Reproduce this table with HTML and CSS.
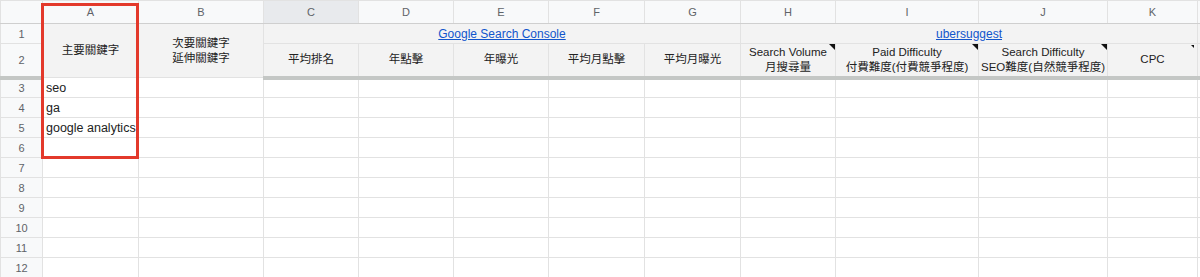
FILE: index.html
```html
<!DOCTYPE html>
<html lang="zh-Hant">
<head>
<meta charset="utf-8">
<title>Sheet</title>
<link rel="stylesheet" href="styles.css">
</head>
<body>
<div class="sheet">
  <table class="grid">
    <colgroup>
      <col class="c-rh"><col class="c-a"><col class="c-b"><col class="c-c"><col class="c-d"><col class="c-e"><col class="c-f"><col class="c-g"><col class="c-h"><col class="c-i"><col class="c-j"><col class="c-k"><col class="c-l">
    </colgroup>
    <tr class="r-colhead">
      <th class="corner"></th>
      <th class="colhead">A</th>
      <th class="colhead">B</th>
      <th class="colhead sel">C</th>
      <th class="colhead">D</th>
      <th class="colhead">E</th>
      <th class="colhead">F</th>
      <th class="colhead">G</th>
      <th class="colhead">H</th>
      <th class="colhead">I</th>
      <th class="colhead">J</th>
      <th class="colhead">K</th>
      <th class="colhead"></th>
    </tr>
    <tr class="r-1">
      <th class="rowhead">1</th>
      <td class="hd" rowspan="2">主要關鍵字</td>
      <td class="hd" rowspan="2">次要關鍵字<br>延伸關鍵字</td>
      <td class="hd link-cell" colspan="5"><a href="#">Google Search Console </a></td>
      <td class="hd link-cell" colspan="4"><a href="#">ubersuggest</a></td>
      <td class="hd"></td>
    </tr>
    <tr class="r-2">
      <th class="rowhead frz">2</th>
      <td class="hd frz">平均排名</td>
      <td class="hd frz">年點擊</td>
      <td class="hd frz">年曝光</td>
      <td class="hd frz">平均月點擊</td>
      <td class="hd frz">平均月曝光</td>
      <td class="hd frz note">Search Volume<br>月搜尋量</td>
      <td class="hd frz note">Paid Difficulty<br>付費難度(付費競爭程度)</td>
      <td class="hd frz note">Search Difficulty<br>SEO難度(自然競爭程度)</td>
      <td class="hd frz note small-note">CPC</td>
      <td class="hd frz"></td>
    </tr>
    <tr><th class="rowhead">3</th><td>seo</td><td></td><td></td><td></td><td></td><td></td><td></td><td></td><td></td><td></td><td></td><td></td></tr>
    <tr><th class="rowhead">4</th><td>ga</td><td></td><td></td><td></td><td></td><td></td><td></td><td></td><td></td><td></td><td></td><td></td></tr>
    <tr><th class="rowhead">5</th><td>google analytics</td><td></td><td></td><td></td><td></td><td></td><td></td><td></td><td></td><td></td><td></td><td></td></tr>
    <tr><th class="rowhead">6</th><td></td><td></td><td></td><td></td><td></td><td></td><td></td><td></td><td></td><td></td><td></td><td></td></tr>
    <tr><th class="rowhead">7</th><td></td><td></td><td></td><td></td><td></td><td></td><td></td><td></td><td></td><td></td><td></td><td></td></tr>
    <tr><th class="rowhead">8</th><td></td><td></td><td></td><td></td><td></td><td></td><td></td><td></td><td></td><td></td><td></td><td></td></tr>
    <tr><th class="rowhead">9</th><td></td><td></td><td></td><td></td><td></td><td></td><td></td><td></td><td></td><td></td><td></td><td></td></tr>
    <tr><th class="rowhead">10</th><td></td><td></td><td></td><td></td><td></td><td></td><td></td><td></td><td></td><td></td><td></td><td></td></tr>
    <tr><th class="rowhead">11</th><td></td><td></td><td></td><td></td><td></td><td></td><td></td><td></td><td></td><td></td><td></td><td></td></tr>
    <tr><th class="rowhead">12</th><td></td><td></td><td></td><td></td><td></td><td></td><td></td><td></td><td></td><td></td><td></td><td></td></tr>
  </table>
  <div class="highlight"></div>
</div>
</body>
</html>
```

FILE: styles.css
```css
html, body {
  margin: 0;
  padding: 0;
  background: #ffffff;
}

.sheet {
  position: relative;
  width: 1200px;
  height: 277px;
  overflow: hidden;
  font-family: "Liberation Sans", Arial, "Noto Sans CJK TC", sans-serif;
}

.grid {
  table-layout: fixed;
  border-collapse: collapse;
  width: 1210px;
}

.c-rh { width: 42px; }
.c-a { width: 96px; }
.c-b { width: 125px; }
.c-c { width: 95px; }
.c-d { width: 95px; }
.c-e { width: 95px; }
.c-f { width: 96px; }
.c-g { width: 96px; }
.c-h { width: 95px; }
.c-i { width: 143px; }
.c-j { width: 129px; }
.c-k { width: 90px; }
.c-l { width: 13px; }

.grid th,
.grid td {
  border: 1px solid #e2e2e2;
  padding: 0 3px;
  height: 20px;
  overflow: hidden;
  white-space: nowrap;
  box-sizing: border-box;
}

.grid td {
  font-size: 12.5px;
  color: #222;
  vertical-align: bottom;
  line-height: 17px;
}

.corner,
.colhead,
.rowhead {
  background: #f8f9fa;
  color: #5f6368;
  font-weight: normal;
  font-size: 11px;
  text-align: center;
  border-color: #d6d6d6;
}

.r-colhead th {
  height: 23px;
  border-bottom: 1px solid #cfcfcf;
}

.colhead.sel {
  background: #e8eaed;
}

.rowhead {
  border-right: 3px solid #c4c7c5;
}

.r-1 th,
.r-1 td {
  height: 20px;
}

.r-2 th,
.r-2 td {
  height: 34px;
}

.hd {
  background: #f3f3f3;
  text-align: center;
  vertical-align: middle !important;
  font-size: 11.5px !important;
  line-height: 15px !important;
  color: #222 !important;
  padding: 0 1px !important;
}

.frz {
  border-bottom: 4px solid #c4c7c5 !important;
}

.link-cell {
  vertical-align: bottom !important;
  line-height: 17px !important;
  font-size: 12px !important;
}

.link-cell a {
  color: #1155cc;
  text-decoration: underline;
}

.note {
  position: relative;
}

.note::after {
  content: "";
  position: absolute;
  top: 0;
  right: 0;
  width: 0;
  height: 0;
  border-top: 6px solid #111;
  border-left: 6px solid transparent;
}

.small-note::after {
  border-top-width: 3px;
  border-left-width: 3px;
  right: 3px;
  top: 1px;
}

.highlight {
  position: absolute;
  left: 41px;
  top: 3px;
  width: 98px;
  height: 156px;
  box-sizing: border-box;
  border: 3px solid #e3392b;
  pointer-events: none;
}
```
